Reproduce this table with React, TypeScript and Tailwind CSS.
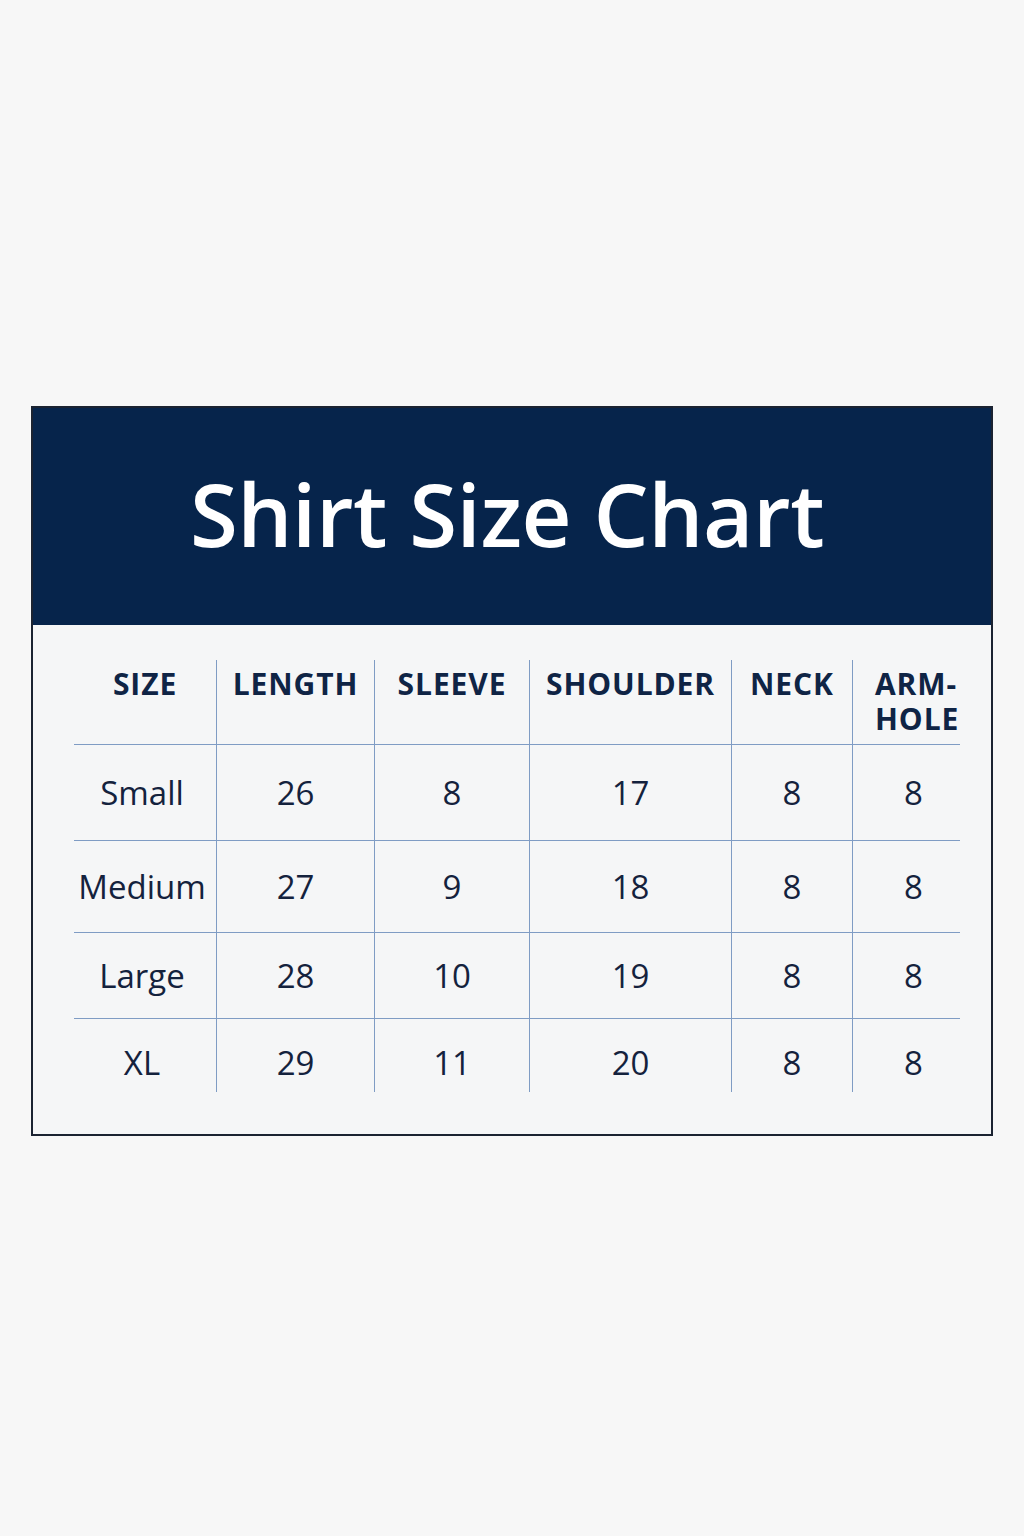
const columns = [
  { label: 'SIZE', width: 'w-[143px]' },
  { label: 'LENGTH', width: 'w-[158px]' },
  { label: 'SLEEVE', width: 'w-[155px]' },
  { label: 'SHOULDER', width: 'w-[202px]' },
  { label: 'NECK', width: 'w-[121px]' },
  { label: 'ARM-\nHOLE', width: 'w-[107px]' },
]

const rows = [
  { cells: ['Small', '26', '8', '17', '8', '8'], height: 'h-[96px]', pad: '' },
  { cells: ['Medium', '27', '9', '18', '8', '8'], height: 'h-[92px]', pad: '' },
  { cells: ['Large', '28', '10', '19', '8', '8'], height: 'h-[86px]', pad: '' },
  { cells: ['XL', '29', '11', '20', '8', '8'], height: 'h-[73px]', pad: 'pt-[13px]' },
]

export default function App() {
  return (
    <div
      className="min-h-screen bg-[#f7f7f7] px-[31px] pt-[406px]"
      style={{ fontFamily: '"Open Sans", "Liberation Sans", sans-serif' }}
    >
      <div className="w-[962px] border-2 border-[#1b2331] bg-[#f5f6f7]">
        <div className="flex h-[217px] items-center justify-center bg-[#06244b] pb-[6px] pr-[10px]">
          <h1 className="text-[87px] font-semibold leading-none tracking-[-0.005em] text-white">
            Shirt Size Chart
          </h1>
        </div>

        <div className="pb-[42px] pl-[41px] pr-[31px] pt-[35px]">
          <div className="flex h-[85px] border-b border-[#7f9cc4]">
            {columns.map((col, i) => (
              <div
                key={col.label}
                className={`${col.width} ${i < columns.length - 1 ? 'border-r border-[#7f9cc4]' : ''} ${
                  i === columns.length - 1 ? 'pl-[22px] text-left' : 'text-center'
                } whitespace-pre pt-[6px] text-[30px] font-bold leading-[35px] tracking-[0.03em] text-[#0f2445]`}
              >
                {col.label}
              </div>
            ))}
          </div>

          {rows.map((row, r) => (
            <div
              key={row.cells[0]}
              className={`flex ${row.height} ${r < rows.length - 1 ? 'border-b border-[#7f9cc4]' : ''}`}
            >
              {row.cells.map((cell, i) => (
                <div
                  key={i}
                  className={`${columns[i].width} ${row.pad} ${
                    i < columns.length - 1 ? 'border-r border-[#7f9cc4]' : 'pl-[14px]'
                  } ${i === 0 ? 'pr-[6px]' : ''} flex items-center justify-center text-[33px] font-medium leading-none text-[#14223d]`}
                >
                  {cell}
                </div>
              ))}
            </div>
          ))}
        </div>
      </div>
    </div>
  )
}
